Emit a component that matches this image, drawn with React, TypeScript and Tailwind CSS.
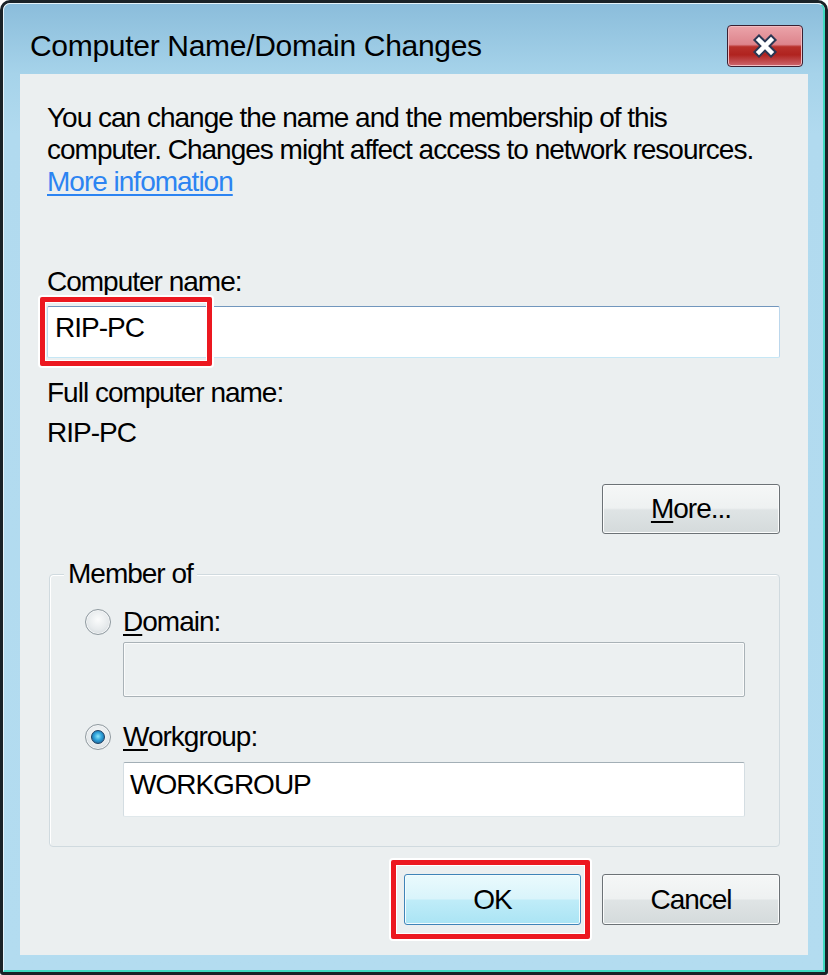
import React from "react";

const FONT = "font-['Liberation_Sans','Arial',sans-serif]";

function Radio({ checked }: { checked?: boolean }) {
  return (
    <div className="w-[26px] h-[26px] rounded-full border border-[#8f999f] bg-[radial-gradient(circle_at_50%_40%,#fbfcfc_0%,#e6eaec_55%,#c8cfd3_100%)] shadow-[inset_0_0_0_1px_#f4f6f7] flex items-center justify-center shrink-0">
      {checked && (
        <div className="w-[14px] h-[14px] rounded-full border border-[#1c3f63] bg-[radial-gradient(circle_at_50%_45%,#8ae6fc_0%,#2c9fd8_45%,#1a4c7c_100%)]" />
      )}
    </div>
  );
}

function CloseX() {
  return (
    <svg width="28" height="24" viewBox="0 0 28 24">
      <path d="M8 6 L20 18 M20 6 L8 18" stroke="#2b3854" strokeWidth="8.5" strokeLinecap="square" fill="none" />
      <path d="M8 6 L20 18 M20 6 L8 18" stroke="#ffffff" strokeWidth="4.5" strokeLinecap="square" fill="none" />
    </svg>
  );
}

export default function App() {
  return (
    <div className={`w-[828px] h-[975px] ${FONT} text-black`}>
      <div className="w-full h-full border-[3px] border-[#1a2227] rounded-t-[10px] rounded-b-[3px] overflow-hidden">
        <div className="w-full h-full flex flex-col rounded-t-[7px] border-t border-l border-[#e4f3fa] border-r-2 border-b-2 border-r-[#3fd9c0] border-b-[#3fd9c0] bg-[linear-gradient(180deg,#8bbddb_0px,#a6d3ea_70px,#b1daef_130px,#b3dcf0_100%)]">
          {/* Title bar */}
          <div className="h-[70px] flex justify-between items-start shrink-0">
            <span className="mt-[25px] ml-[26px] text-[30px] leading-[34px] tracking-[-0.3px]">
              Computer Name/Domain Changes
            </span>
            <div className="mt-[21px] mr-[20px] w-[76px] h-[42px] rounded-[4px] border border-[#3a2032] bg-[linear-gradient(180deg,#eba4aa_0%,#dd848c_46%,#b8302b_52%,#b0231f_72%,#cd6870_100%)] shadow-[inset_0_0_0_1px_#f1bcc1] flex items-center justify-center">
              <CloseX />
            </div>
          </div>

          {/* Content */}
          <div className="flex-1 ml-[16px] mr-[15px] mb-[15px] bg-[#ebeff0] flex flex-col pt-[28px] pl-[27px] pr-[28px] text-[28px] leading-[32px] tracking-[-1px]">
            <div>
              <div>You can change the name and the membership of this</div>
              <div>computer. Changes might affect access to network resources.</div>
              <div>
                <span className="text-[#2c84f2] underline decoration-2 underline-offset-[3px]">More infomation</span>
              </div>
            </div>

            <div className="mt-[68px]">Computer name:</div>
            <div className="relative mt-[8px] h-[52px] rounded-[2px] bg-white border border-[#bcd7ec] border-t-[#7196bd] border-b-[#c6e7f5] pl-[7px] pt-[5px]">
              RIP-PC
              <div className="absolute left-[-8px] top-[-10px] w-[172px] h-[69px] border-[5px] border-[#ec1820] rounded-[2px] shadow-[0_0_0_2px_#ffffff,inset_0_0_0_1px_#ffffff]" />
            </div>

            <div className="mt-[19px]">Full computer name:</div>
            <div className="mt-[8px]">RIP-PC</div>

            <div className="self-end mt-[35px] w-[178px] h-[50px] rounded-[3px] border border-[#6c7276] bg-[linear-gradient(180deg,#f5f7f7_0%,#eef1f1_48%,#dfe4e5_52%,#d4dadb_100%)] shadow-[inset_0_0_0_1px_#fbfcfc] flex items-center justify-center">
              <span>
                <span className="underline decoration-2 underline-offset-[3px]">M</span>ore...
              </span>
            </div>

            <fieldset className="mt-[24px] ml-[2px] border border-[#d0dadf] rounded-[4px] shadow-[inset_1px_1px_0_#ffffff] pl-[14px] pr-[34px] pt-[16px] pb-[29px]">
              <legend className="px-[4px] bg-[#ebeff0]">Member of</legend>
              <div className="ml-[21px] flex flex-col">
                <div className="flex items-center gap-[12px]">
                  <Radio />
                  <span>
                    <span className="underline decoration-2 underline-offset-[3px]">D</span>omain:
                  </span>
                </div>
                <div className="ml-[38px] mt-[4px] h-[55px] rounded-[2px] border border-[#a9b2b7] bg-[#ecf0f1] shadow-[inset_0_0_0_1px_#fafbfb]" />
                <div className="flex items-center gap-[12px] mt-[24px]">
                  <Radio checked />
                  <span>
                    <span className="underline decoration-2 underline-offset-[3px]">W</span>orkgroup:
                  </span>
                </div>
                <div className="ml-[38px] mt-[9px] h-[55px] rounded-[2px] bg-white border border-[#d4dde2] border-t-[#a3afb6] border-b-[#e0e8eb] pl-[6px] pt-[6px]">
                  WORKGROUP
                </div>
              </div>
            </fieldset>

            <div className="flex justify-end gap-[21px] mt-[27px]">
              <div className="relative w-[177px] h-[51px] rounded-[3px] border border-[#3f84b8] bg-[linear-gradient(180deg,#eafafd_0%,#d9f4fb_48%,#bfecf8_52%,#aae4f4_100%)] shadow-[inset_0_0_0_1px_#f3fcfe] flex items-center justify-center">
                OK
                <div className="absolute left-[-14px] top-[-15px] w-[199px] h-[79px] border-[5px] border-[#ec1820] rounded-[2px] shadow-[0_0_0_2px_#ffffff,inset_0_0_0_1px_#ffffff]" />
              </div>
              <div className="w-[178px] h-[51px] rounded-[3px] border border-[#6c7276] bg-[linear-gradient(180deg,#f5f7f7_0%,#eef1f1_48%,#dfe4e5_52%,#d4dadb_100%)] shadow-[inset_0_0_0_1px_#fbfcfc] flex items-center justify-center">
                Cancel
              </div>
            </div>
          </div>
        </div>
      </div>
    </div>
  );
}
